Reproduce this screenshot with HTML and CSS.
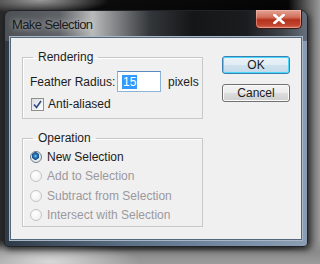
FILE: index.html
```html
<!DOCTYPE html>
<html lang="en">
<head>
    <meta charset="UTF-8">
    <meta name="viewport" content="width=device-width, initial-scale=1.0">
    <title>Make Selection</title>
    <link rel="stylesheet" href="styles.css">
</head>
<body>
    <div class="window">
        <div class="titlebar">
            <span class="title">Make Selection</span>
            <button class="close" type="button" aria-label="Close">
                <svg width="12" height="10" viewBox="0 0 12 10">
                    <path d="M1.5 1 L10.5 9 M10.5 1 L1.5 9" stroke="#ffffff" stroke-width="2.6" stroke-linecap="square"/>
                </svg>
            </button>
        </div>
        <div class="client">
            <div class="groups">
                <fieldset class="group rendering">
                    <legend>Rendering</legend>
                    <div class="row">
                        <label for="radius">Feather Radius:</label>
                        <span class="field" id="radius"><span class="sel">15</span></span>
                        <span class="unit">pixels</span>
                    </div>
                    <div class="row check-row">
                        <span class="checkbox">
                            <svg width="9" height="9" viewBox="0 0 9 9">
                                <path d="M1 4.5 L3.5 7.5 L8 1" fill="none" stroke="#2a4a86" stroke-width="1.6"/>
                            </svg>
                        </span>
                        <span>Anti-aliased</span>
                    </div>
                </fieldset>
                <fieldset class="group operation">
                    <legend>Operation</legend>
                    <div class="radio-row"><span class="radio on"></span><span>New Selection</span></div>
                    <div class="radio-row off"><span class="radio"></span><span>Add to Selection</span></div>
                    <div class="radio-row off"><span class="radio"></span><span>Subtract from Selection</span></div>
                    <div class="radio-row off"><span class="radio"></span><span>Intersect with Selection</span></div>
                </fieldset>
            </div>
            <div class="buttons">
                <button class="btn default" type="button">OK</button>
                <button class="btn" type="button">Cancel</button>
            </div>
        </div>
    </div>
</body>
</html>
```

FILE: styles.css
```css
body {
    margin: 0;
    width: 320px;
    height: 264px;
    overflow: hidden;
    padding: 10px 0 0 4px;
    box-sizing: border-box;
    font-family: 'Liberation Sans', Arial, sans-serif;
    font-size: 12px;
    color: #1c1c1c;
    background:
        radial-gradient(ellipse 70px 14px at 40px 0px, #9a9a9a, rgba(0,0,0,0)),
        radial-gradient(ellipse 90px 20px at 50px 262px, #d8d8d8, rgba(0,0,0,0)),
        linear-gradient(180deg, rgba(0,0,0,0) 240px, #8a8a8a 252px, #9c9c9c 264px),
        linear-gradient(90deg, #2a2a2a 0%, #0c0c0c 30%, #050505 90%, #6e6e6e 97%, #9a9a9a 100%);
}

.window {
    width: 304px;
    height: 237px;
    box-sizing: border-box;
    border: 1px solid #202428;
    border-radius: 7px 7px 4px 4px;
    background:
        linear-gradient(90deg, #4d5156 0%, #5e6165 18%, #b9babb 29%, #8e9092 35%, #33363a 48%, #151617 62%, #1b1c1e 80%, #3f444a 92%, #66707c 100%) top / 100% 30px no-repeat,
        linear-gradient(90deg, #2f3a46 0%, #5a6e84 40%, #7b90a8 80%, #8b9db2 100%);
    box-shadow: 2px 3px 6px rgba(0, 0, 0, 0.6);
    display: flex;
    flex-direction: column;
}

.titlebar {
    height: 26px;
    display: flex;
    align-items: flex-start;
    padding: 0 5px 0 7px;
}

.title {
    margin-top: 6px;
    font-size: 13px;
    letter-spacing: -0.6px;
    color: #1a1a1a;
    text-shadow: 0 0 6px rgba(255, 255, 255, 0.7);
}

.close {
    margin-left: auto;
    margin-top: -1px;
    width: 47px;
    height: 19px;
    padding: 0;
    border: 1px solid #3e1a16;
    border-top: none;
    border-radius: 0 0 5px 5px;
    background: linear-gradient(180deg, #e4a495 0%, #d2705c 40%, #b5321c 55%, #c24630 85%, #d9745c 100%);
    box-shadow: inset 0 0 0 1px rgba(255, 200, 190, 0.45);
    display: flex;
    align-items: center;
    justify-content: center;
}

.client {
    flex: 1;
    margin: 0 5px 6px 5px;
    background-color: #f0f0f0;
    border: 1px solid #55677a;
    box-shadow: 0 0 0 1px #a9b7c6;
    display: flex;
    padding: 12px 0 0 11px;
}

.groups {
    width: 181px;
    display: flex;
    flex-direction: column;
}

.group {
    margin: 0;
    border: 1px solid #c8c8c8;
    box-shadow: inset 1px 1px 0 #ffffff;
    padding: 0 0 0 7px;
    min-width: 0;
}

.group legend {
    margin-left: 3px;
    padding: 0 5px;
    line-height: 14px;
}

.rendering {
    height: 69px;
    box-sizing: border-box;
}

.row {
    display: flex;
    align-items: center;
    margin-top: 7px;
    height: 21px;
}

.row label {
    width: 87px;
}

.field {
    width: 38px;
    height: 19px;
    border: 1px solid #8fb2d9;
    border-top-color: #5b8ac0;
    background-color: #ffffff;
    display: flex;
    align-items: center;
    padding-left: 4px;
    box-sizing: content-box;
}

.sel {
    background-color: #3399ff;
    color: #ffffff;
    line-height: 14px;
    padding: 0 1px;
}

.unit {
    margin-left: 7px;
}

.check-row {
    margin-top: 2px;
    height: 20px;
}

.checkbox {
    width: 11px;
    height: 11px;
    margin: 0 4px 0 1px;
    border: 1px solid #8e8f8f;
    background: linear-gradient(135deg, #dcdcdc, #ffffff);
    display: flex;
    align-items: center;
    justify-content: center;
}

.operation {
    margin-top: 12px;
    height: 96px;
    box-sizing: border-box;
    padding-top: 2px;
}

.radio-row {
    height: 19.5px;
    display: flex;
    align-items: center;
}

.radio-row.off {
    color: #9c989e;
}

.radio {
    width: 10px;
    height: 10px;
    border-radius: 50%;
    border: 1px solid #c2c4c6;
    background: radial-gradient(circle at 40% 35%, #ffffff, #ececec);
    margin: 0 5px 0 0;
}

.radio.on {
    border-color: #6d7a88;
    background: radial-gradient(circle at 45% 40%, #7ec7f2 0, #1f6fb2 2px, #1c4f88 3.5px, #dfe5ea 4px, #f4f6f8 100%);
}

.buttons {
    margin-left: 19px;
    padding-top: 6px;
    display: flex;
    flex-direction: column;
    gap: 10px;
}

.btn {
    width: 68px;
    height: 18px;
    padding: 0;
    font-family: 'Liberation Sans', Arial, sans-serif;
    font-size: 12px;
    color: #1a1a1a;
    border: 1px solid #707070;
    border-radius: 3px;
    background: linear-gradient(180deg, #f3f3f3 0%, #ebebeb 50%, #dddddd 51%, #cfcfcf 100%);
    box-shadow: inset 0 0 0 1px #fbfbfb;
}

.btn.default {
    border-color: #3c7fb1;
    background: linear-gradient(180deg, #eaf3f8 0%, #e0ecf3 50%, #cfe2ee 51%, #c4d9e8 100%);
    box-shadow: inset 0 0 0 1px #48d8fb;
}
```
